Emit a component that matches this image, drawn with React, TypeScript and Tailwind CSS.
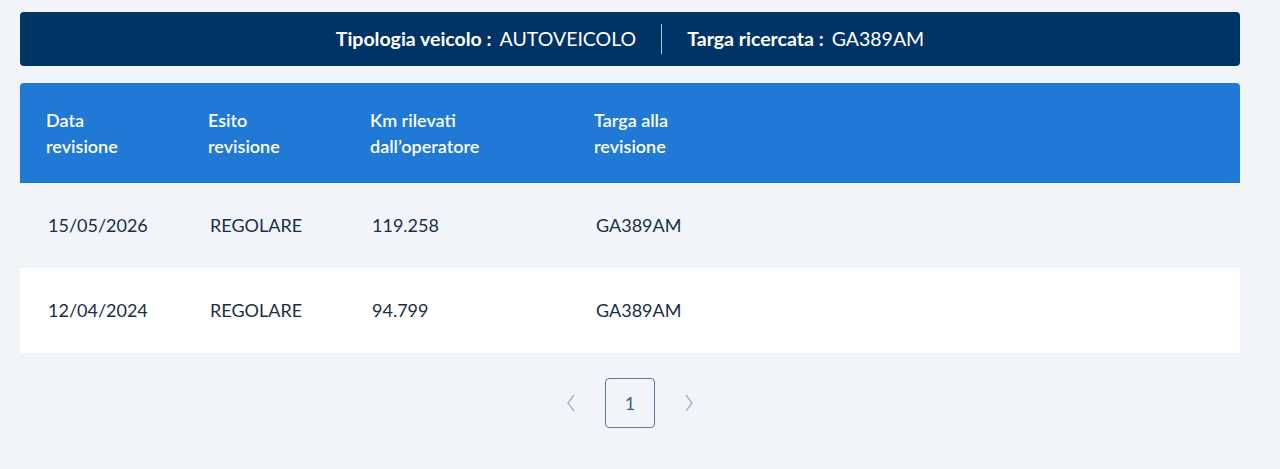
const rows = [
  { data: "15/05/2026", esito: "REGOLARE", km: "119.258", targa: "GA389AM" },
  { data: "12/04/2024", esito: "REGOLARE", km: "94.799", targa: "GA389AM" },
];

export default function App() {
  return (
    <div className="min-h-[469px] w-full bg-[#f1f5f9] pl-5 pr-10 pt-3 font-['Lato',sans-serif] text-[#1a2e44]">
      {/* Summary bar */}
      <div className="flex h-[54px] items-center justify-center rounded bg-[#003366] text-[19.5px] text-white">
        <div>
          <span className="font-bold">Tipologia veicolo :</span>
          <span className="ml-2 font-normal">AUTOVEICOLO</span>
        </div>
        <div className="mx-[25px] h-[30px] w-px bg-white/70" />
        <div>
          <span className="font-bold">Targa ricercata :</span>
          <span className="ml-2 font-normal">GA389AM</span>
        </div>
      </div>

      {/* Table */}
      <div className="mt-[17px]">
        <div className="grid h-[100px] grid-cols-[162px_162px_224px_1fr] items-center rounded-t bg-[#2079d4] pl-[26px] text-[18px] font-semibold leading-[26px] text-white">
          <div>Data<br />revisione</div>
          <div>Esito<br />revisione</div>
          <div>Km rilevati<br />dall’operatore</div>
          <div>Targa alla<br />revisione</div>
        </div>
        {rows.map((r, i) => (
          <div
            key={i}
            className={`grid h-[85px] grid-cols-[162px_162px_224px_1fr] items-center pl-[28px] text-[18px] font-normal ${i % 2 === 1 ? "bg-white" : ""}`}
          >
            <div>{r.data}</div>
            <div>{r.esito}</div>
            <div>{r.km}</div>
            <div>{r.targa}</div>
          </div>
        ))}
      </div>

      {/* Pagination */}
      <div className="mt-[25px] flex items-center justify-center gap-[28px]">
        <svg width="12" height="20" viewBox="0 0 12 20" fill="none" stroke="#a9b5c1" strokeWidth="1.5">
          <path d="M9 2L3 10l6 8" />
        </svg>
        <div className="flex h-[50px] w-[50px] items-center justify-center rounded border border-[#5c7a93] text-[18px] text-[#3f6380]">
          1
        </div>
        <svg width="12" height="20" viewBox="0 0 12 20" fill="none" stroke="#a9b5c1" strokeWidth="1.5">
          <path d="M3 2l6 8-6 8" />
        </svg>
      </div>
    </div>
  );
}
